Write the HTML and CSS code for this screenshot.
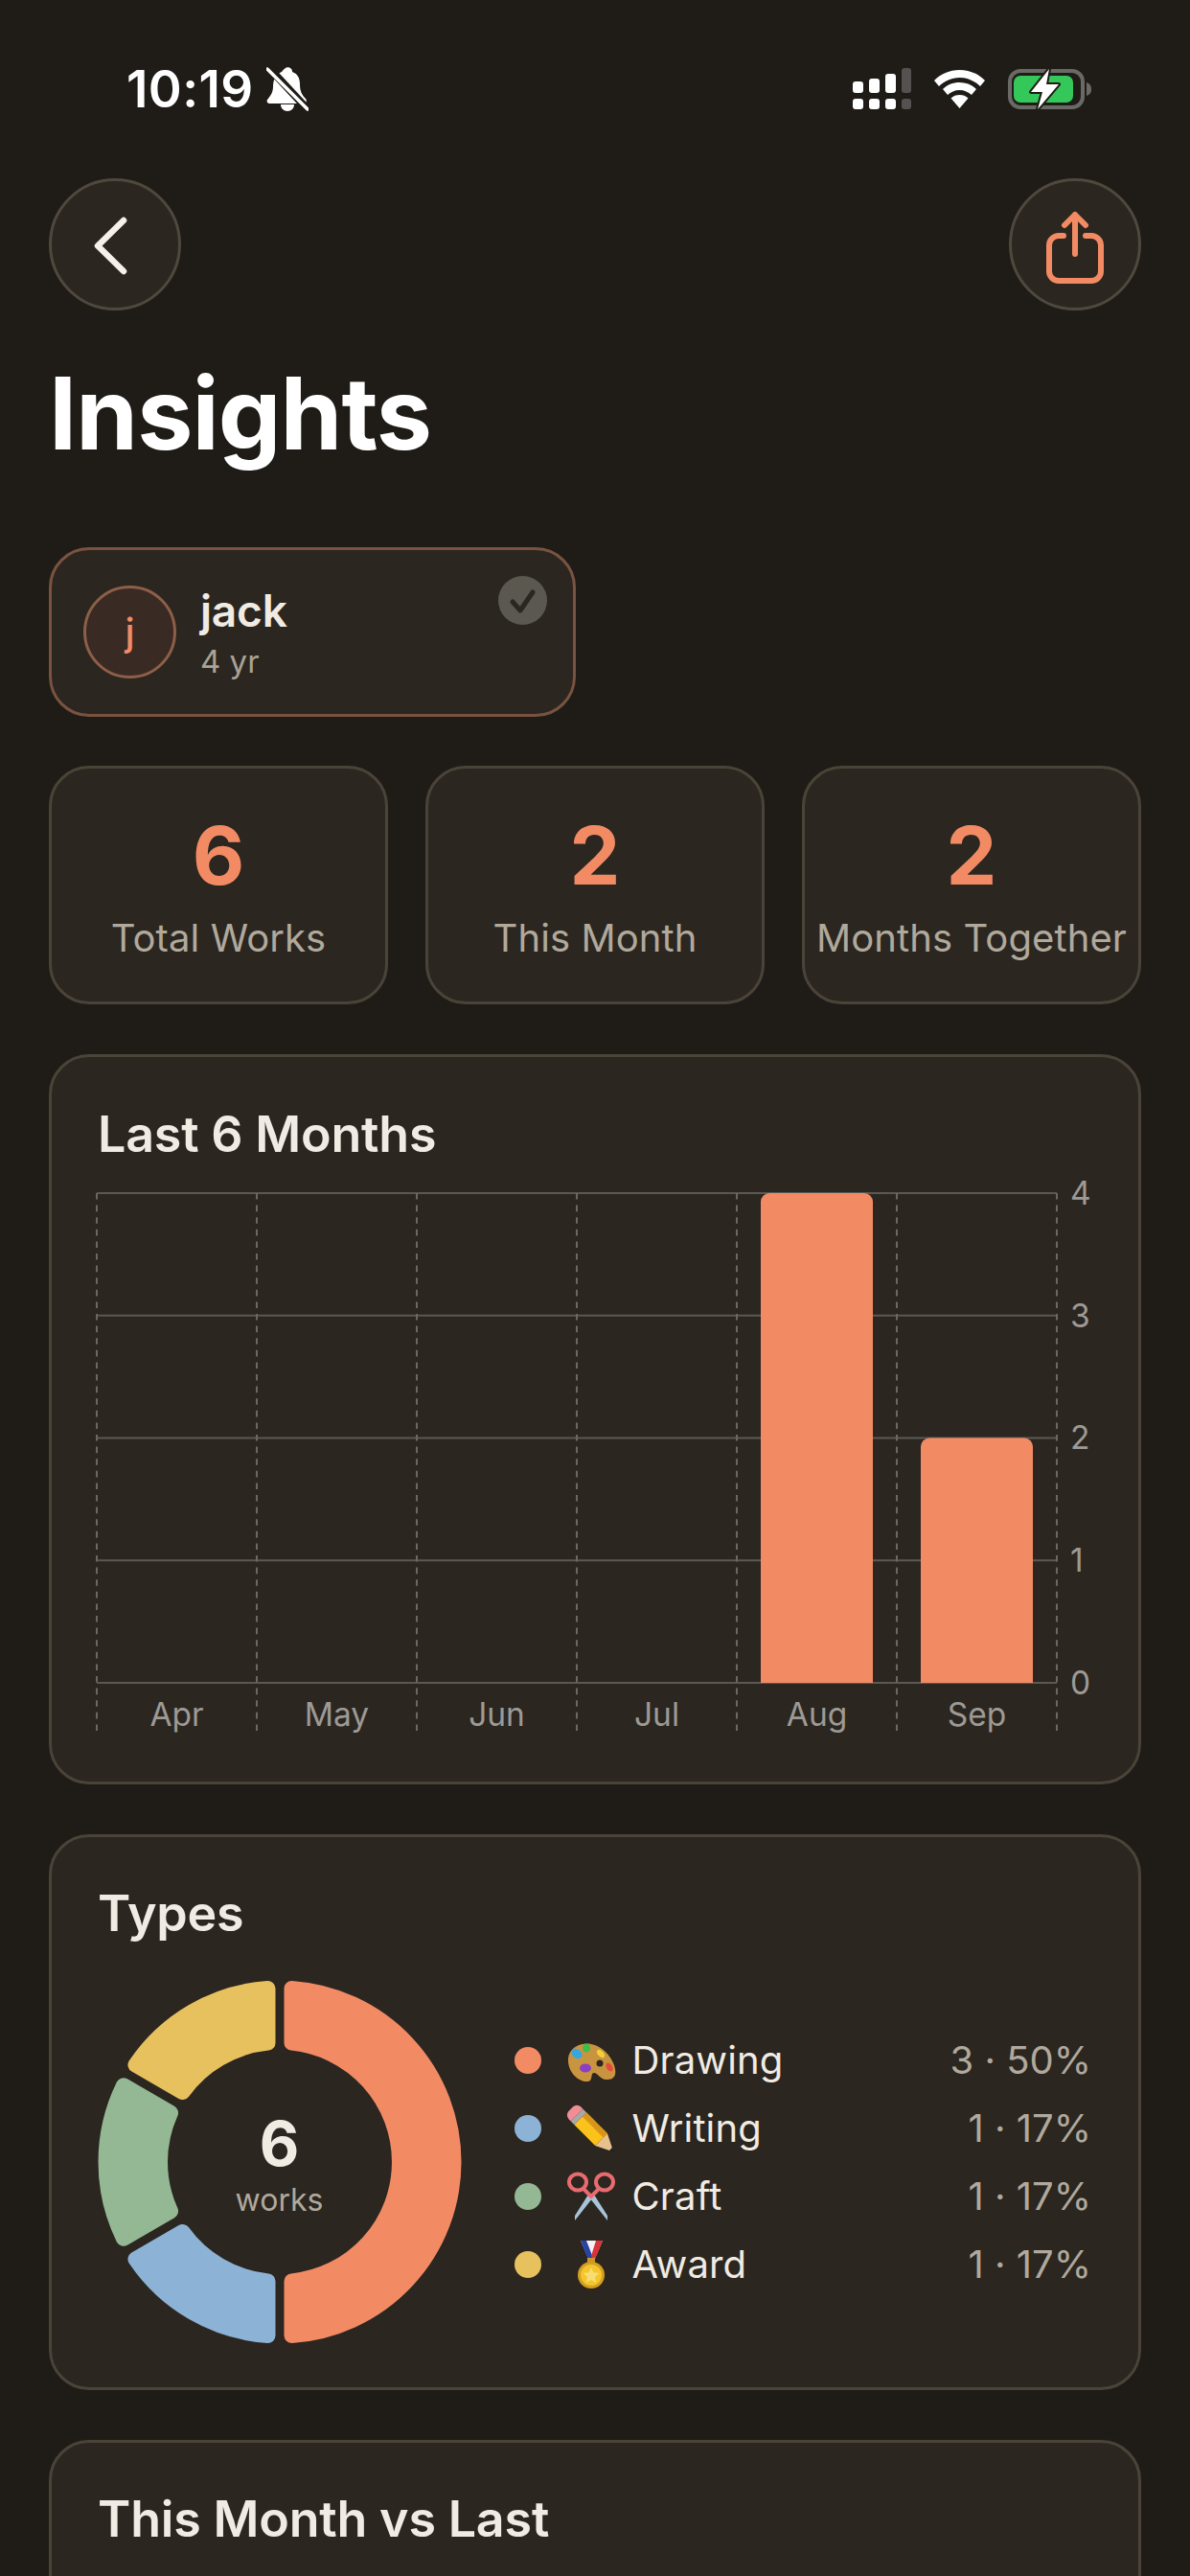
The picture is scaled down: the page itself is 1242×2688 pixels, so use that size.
FILE: index.html
```html
<!DOCTYPE html>
<html lang="en">
<head>
<meta charset="utf-8">
<title>Insights</title>
<link rel="stylesheet" href="styles.css">
</head>
<body>
<div class="screen">
  <header class="status">
    <div class="status-left">
      <span class="time">10:19</span>
      <svg class="bell" viewBox="0 0 44 46" width="44" height="46">
        <path class="white" d="M20 1c1-1 5-1 6 1 1 1 1 2 1 3 6 2 8 7 8 13 0 7 2 11 6 15 2 3 0 5-3 5H4c-3 0-4-2-3-4 4-5 6-8 6-14 0-7 3-13 9-15 1-1 2-3 4-4z"/>
        <path class="white" d="M15 39h14c0 4-3 7-7 7s-7-3-7-7z"/>
        <path class="bell-cut" d="M3 1l39 42"/>
        <path class="bell-line" d="M1 2l42 42"/>
      </svg>
    </div>
    <div class="status-right">
      <svg class="signal" viewBox="0 0 61 44" width="61" height="44">
        <rect class="white" x="0" y="14" width="11" height="12" rx="3"/>
        <rect class="white" x="17" y="11" width="11" height="15" rx="3"/>
        <rect class="white" x="34" y="6" width="11" height="20" rx="3"/>
        <rect class="dim" x="51" y="0" width="10" height="26" rx="3"/>
        <rect class="white" x="0" y="32" width="11" height="11" rx="3"/>
        <rect class="white" x="17" y="32" width="11" height="11" rx="3"/>
        <rect class="white" x="34" y="32" width="11" height="11" rx="3"/>
        <rect class="dim" x="51" y="32" width="10" height="11" rx="3"/>
      </svg>
      <svg class="wifi" viewBox="0 0 53 40" width="53" height="40">
        <path class="white" d="M26.5 0C16 0 7 4 0 11l5 6c6-5.500 13-9 21.500-9S42 11.500 48 17l5-6C46 4 37 0 26.500 0z"/>
        <path class="white" d="M26.500 13c-7 0-13 2.500-17.500 7l5 6c3.500-3 7.500-5 12.500-5s9 2 12.500 5l5-6c-4.500-4.500-10.500-7-17.500-7z"/>
        <path class="white" d="M26.500 26c-3.500 0-6.500 1-9 3.500l9 10.500 9-10.500c-2.500-2.500-5.500-3.500-9-3.500z"/>
      </svg>
      <svg class="battery" viewBox="0 0 87 44" width="87" height="44">
        <rect class="batt-shell" x="2" y="3" width="76" height="38" rx="11"/>
        <path class="batt-nub" d="M82 15c3 1 5 3 5 7s-2 6-5 7z"/>
        <rect class="batt-fill" x="6" y="8" width="62" height="28" rx="7"/>
        <path class="batt-bolt" d="M43 1L24 25h12l-5 18 22-26H40z"/>
      </svg>
    </div>
  </header>

  <main class="content">
    <nav class="nav">
      <button class="round-btn" aria-label="Back">
        <svg viewBox="0 0 132 132" width="132" height="132"><path class="chevron" d="M75 41L48 67.500 75 94"/></svg>
      </button>
      <button class="round-btn" aria-label="Share">
        <svg viewBox="0 0 132 132" width="132" height="132">
          <path class="share" d="M54 57h-5a10 10 0 0 0-10 10v27a10 10 0 0 0 10 10h34a10 10 0 0 0 10-10V67a10 10 0 0 0-10-10h-6"/>
          <path class="share" d="M66 76V35M55 46l11-11 11 11"/>
        </svg>
      </button>
    </nav>

    <h1 class="page-title">Insights</h1>

    <section class="user-card">
      <div class="avatar">j</div>
      <div class="user-text">
        <div class="user-name">jack</div>
        <div class="user-age">4 yr</div>
      </div>
      <svg class="check" viewBox="0 0 51 51" width="51" height="51">
        <circle class="check-bg" cx="25.500" cy="25.500" r="25.500"/>
        <path class="check-mark" d="M15 27l8 9 13-19"/>
      </svg>
    </section>

    <section class="stats">
      <div class="stat"><div class="stat-num">6</div><div class="stat-label">Total Works</div></div>
      <div class="stat"><div class="stat-num">2</div><div class="stat-label">This Month</div></div>
      <div class="stat"><div class="stat-num">2</div><div class="stat-label">Months Together</div></div>
    </section>

    <section class="card chart-card">
      <h2 class="card-title">Last 6 Months</h2>
      <svg class="chart" viewBox="0 -20 1040 590" width="1040" height="590">
        <g class="grid-h">
          <path d="M1 5H1003"/><path d="M1 132.750H1003"/><path d="M1 260.500H1003"/><path d="M1 388.250H1003"/><path d="M1 516H1003"/>
        </g>
        <g class="grid-v">
          <path d="M1 5V567"/><path d="M168 5V567"/><path d="M335 5V567"/><path d="M502 5V567"/><path d="M669 5V567"/><path d="M836 5V567"/><path d="M1003 5V567"/>
        </g>
        <path class="bar" d="M694 516V14a9 9 0 0 1 9-9h99a9 9 0 0 1 9 9V516z"/>
        <path class="bar" d="M861 516V269.500a9 9 0 0 1 9-9h99a9 9 0 0 1 9 9V516z"/>
        <g class="axis-y">
          <text x="1017" y="17">4</text><text x="1017" y="145">3</text><text x="1017" y="272">2</text><text x="1017" y="400">1</text><text x="1017" y="528">0</text>
        </g>
        <g class="axis-x">
          <text x="84.500" y="561">Apr</text><text x="251.500" y="561">May</text><text x="418.500" y="561">Jun</text><text x="585.500" y="561">Jul</text><text x="752.500" y="561">Aug</text><text x="919.500" y="561">Sep</text>
        </g>
      </svg>
    </section>

    <section class="card types-card">
      <h2 class="card-title">Types</h2>
      <div class="types-body">
        <div class="donut-wrap">
          <svg class="donut" viewBox="-190 -190 380 380" width="380" height="380">
            <path class="seg seg-orange" d="M12.500 -181.070A181.500 181.500 0 0 1 12.500 181.070L12.500 124.370A125 125 0 0 0 12.500 -124.370Z"/>
            <path class="seg seg-blue" d="M-12.500 181.070A181.500 181.500 0 0 1 -150.560 101.360L-101.460 73.010A125 125 0 0 0 -12.500 124.370Z"/>
            <path class="seg seg-green" d="M-163.060 79.710A181.500 181.500 0 0 1 -163.060 -79.710L-113.960 -51.360A125 125 0 0 0 -113.960 51.360Z"/>
            <path class="seg seg-yellow" d="M-150.560 -101.360A181.500 181.500 0 0 1 -12.500 -181.070L-12.500 -124.370A125 125 0 0 0 -101.460 -73.010Z"/>
          </svg>
          <div class="donut-center">
            <div class="donut-num">6</div>
            <div class="donut-label">works</div>
          </div>
        </div>
        <ul class="legend">
          <li class="legend-row">
            <span class="dot dot-orange"></span>
            <svg class="emoji" viewBox="0 0 52 52" width="52" height="52">
              <path class="pal-body" d="M2 24C3 13 15 7 26 9c11 2 20 11 24 22 3 9 1 15-7 15-7 1-10-7-14-7-4 0-1 8-6 9C12 49 1 37 2 24z"/>
              <ellipse class="pal-blue" cx="11" cy="19" rx="4.500" ry="6" transform="rotate(-50 11 19)"/>
              <ellipse class="pal-green" cx="21" cy="13" rx="4" ry="4.500"/>
              <ellipse class="pal-yellow" cx="36" cy="19" rx="3" ry="5" transform="rotate(-45 36 19)"/>
              <ellipse class="pal-purple" cx="20" cy="34" rx="6" ry="4.500"/>
              <ellipse class="pal-red" cx="45" cy="33" rx="3" ry="5" transform="rotate(-30 45 33)"/>
              <circle class="pal-hole" cx="35" cy="29" r="3.500"/>
            </svg>
            <span class="legend-name">Drawing</span>
            <span class="legend-val">3 · 50%</span>
          </li>
          <li class="legend-row">
            <span class="dot dot-blue"></span>
            <svg class="emoji" viewBox="0 0 52 52" width="52" height="52">
              <g transform="translate(50 51) rotate(-45)">
                <path class="pen-tip" d="M-2 -5L0 0L2 -5z"/>
                <path class="pen-wood" d="M-9 -19L-2 -5H2L9 -19z"/>
                <rect class="pen-body" x="-9" y="-50" width="18" height="31"/>
                <rect class="pen-shade" x="3" y="-50" width="6" height="31"/>
                <rect class="pen-ferrule" x="-9" y="-55" width="18" height="5"/>
                <path class="pen-eraser" d="M-9 -55V-58a6 6 0 0 1 6-6H3a6 6 0 0 1 6 6V-55z"/>
              </g>
            </svg>
            <span class="legend-name">Writing</span>
            <span class="legend-val">1 · 17%</span>
          </li>
          <li class="legend-row">
            <span class="dot dot-green"></span>
            <svg class="emoji" viewBox="0 0 52 52" width="52" height="52">
              <path class="blade-a" d="M24 27L29 24 43 46 43 51z"/>
              <path class="blade-b" d="M28 27L23 24 9 46 9 51z"/>
              <path class="handle" d="M18 18L27 27M34 18L25 27"/>
              <ellipse class="handle" cx="12" cy="11" rx="9" ry="8.500"/>
              <ellipse class="handle" cx="40" cy="11" rx="9" ry="8.500"/>
            </svg>
            <span class="legend-name">Craft</span>
            <span class="legend-val">1 · 17%</span>
          </li>
          <li class="legend-row">
            <span class="dot dot-yellow"></span>
            <svg class="emoji" viewBox="0 0 52 52" width="52" height="52">
              <path class="rib-white" d="M15 1H38L29 22H24z"/>
              <path class="rib-blue" d="M15 1H21L28 19 24 23z"/>
              <path class="rib-red" d="M31 1H38L29 23 26 17z"/>
              <rect class="med-ring" x="22" y="19" width="8" height="6"/>
              <circle class="med-edge" cx="26" cy="37" r="14"/>
              <circle class="med-face" cx="26" cy="37" r="11"/>
              <path class="med-star" d="M26 29l2.500 5.300 5.800.700-4.300 4 1.100 5.700-5.100-2.800-5.100 2.800 1.100-5.700-4.300-4 5.800-.7z"/>
            </svg>
            <span class="legend-name">Award</span>
            <span class="legend-val">1 · 17%</span>
          </li>
        </ul>
      </div>
    </section>

    <section class="card clipped-card">
      <h2 class="card-title">This Month vs Last</h2>
    </section>
  </main>
</div>
</body>
</html>
```
FILE: styles.css
```css
* { box-sizing: border-box; }
html, body { margin: 0; padding: 0; background: #1f1c17; }
body { font-family: Inter, "Liberation Sans", sans-serif; color: #f0ebe3; }
.screen { width: 1242px; height: 2688px; overflow: hidden; background: #1f1c17; }

/* status bar */
.status { display: flex; justify-content: space-between; align-items: center; height: 186px; padding: 70px 103px 70px 132px; }
.status-left { display: flex; align-items: center; gap: 13px; }
.status-right { display: flex; align-items: center; gap: 24px; }
.time { font-size: 53px; font-weight: 600; line-height: 46px; color: #fff; letter-spacing: .4px; }
.white { fill: #fff; }
.dim { fill: #545250; }
.bell-cut { stroke: #1f1c17; stroke-width: 8; fill: none; }
.bell-line { stroke: #fff; stroke-width: 3.500; stroke-linecap: round; fill: none; }
.batt-shell { fill: none; stroke: #6a6966; stroke-width: 4; }
.batt-nub { fill: #6a6966; }
.batt-fill { fill: #34c759; }
.batt-bolt { fill: #fff; stroke: #1f1c17; stroke-width: 4; stroke-linejoin: round; paint-order: stroke; }

/* page */
.content { padding: 0 51px; display: flex; flex-direction: column; gap: 51px; }
.nav { display: flex; justify-content: space-between; }
.round-btn { width: 138px; height: 138px; padding: 0; border-radius: 50%; border: 3px solid #4f483d; background: #2b2620; display: block; }
.round-btn svg { display: block; }
.chevron { fill: none; stroke: #f5f0e8; stroke-width: 6.500; stroke-linecap: round; stroke-linejoin: round; }
.share { fill: none; stroke: #f28b64; stroke-width: 6; stroke-linecap: round; stroke-linejoin: round; }
.page-title { margin: -6px 0 27px; font-size: 104px; line-height: 124px; font-weight: 700; color: #fff; letter-spacing: -.9px; }

/* user */
.user-card { position: relative; width: 550px; height: 177px; display: flex; align-items: center; gap: 25px; padding-left: 33px; background: #2b2620; border: 3px solid #7a5340; border-radius: 42px; }
.avatar { width: 97px; height: 97px; border-radius: 50%; border: 3px solid #8d5f48; background: #3a2a24; color: #f28b64; font-size: 40px; font-weight: 500; display: flex; align-items: center; justify-content: center; }
.user-name { font-size: 46px; line-height: 56px; font-weight: 600; color: #f0ebe3; letter-spacing: -.2px; }
.user-age { margin-top: 5px; font-size: 33px; line-height: 40px; color: #a9a296; }
.check { position: absolute; top: 27px; right: 27px; }
.check-bg { fill: #5b5850; }
.check-mark { fill: none; stroke: #2b2620; stroke-width: 5; stroke-linecap: round; stroke-linejoin: round; }

/* stats */
.stats { display: grid; grid-template-columns: repeat(3, 1fr); gap: 39px; margin-bottom: 1px; }
.stat { height: 249px; padding-top: 46px; background: #2b2620; border: 3px solid #4a4338; border-radius: 42px; text-align: center; }
.stat-num { font-size: 84px; line-height: 90px; font-weight: 700; color: #f28b64; }
.stat-label { margin-top: 17px; font-size: 40px; line-height: 48px; color: #b0a99c; white-space: nowrap; letter-spacing: .1px; }

/* cards */
.card { padding: 50px 49px 49px 48px; background: #2b2620; border: 3px solid #4a4338; border-radius: 42px; }
.card-title { margin: 0; font-size: 52px; line-height: 62px; font-weight: 600; color: #f0ebe3; letter-spacing: -.2px; }
.chart-card { margin-bottom: 1px; }
.chart-card .card-title { margin-bottom: 5px; }
.chart { display: block; margin-left: -2px; }
.grid-h path { stroke: #5c5954; stroke-width: 2; fill: none; }
.grid-v path { stroke: #6b6864; stroke-width: 2; stroke-dasharray: 6.600 6; fill: none; }
.bar { fill: #f28b64; }
.axis-y text, .axis-x text { font-family: Inter, "Liberation Sans", sans-serif; font-size: 33.500px; fill: #9d9a95; }
.axis-x text { text-anchor: middle; }

/* types */
.types-card { padding-top: 49px; height: 580px; margin-bottom: 1px; }
.types-card .card-title { margin-bottom: 38px; }
.types-body { display: flex; align-items: center; }
.donut-wrap { position: relative; width: 380px; height: 380px; margin-left: -.5px; flex: none; }
.donut { display: block; }
.seg { stroke-width: 16; stroke-linejoin: round; }
.seg-orange { fill: #f28b64; stroke: #f28b64; }
.seg-blue { fill: #8cb3d6; stroke: #8cb3d6; }
.seg-green { fill: #94b893; stroke: #94b893; }
.seg-yellow { fill: #e8c15f; stroke: #e8c15f; }
.donut-center { position: absolute; inset: 0; padding-top: 5px; display: flex; flex-direction: column; align-items: center; justify-content: center; }
.donut-num { font-size: 64px; line-height: 72px; font-weight: 700; color: #f0ebe3; }
.donut-label { font-size: 32px; line-height: 40px; color: #b0a99c; margin-top: 3px; }

.legend { flex: 1; margin: 0 0 0 55px; padding: 0; list-style: none; display: flex; flex-direction: column; }
.legend-row { display: flex; align-items: center; height: 71px; }
.dot { width: 28px; height: 28px; border-radius: 50%; flex: none; }
.dot-orange { background: #f28b64; }
.dot-blue { background: #8cb3d6; }
.dot-green { background: #94b893; }
.dot-yellow { background: #e8c15f; }
.emoji { flex: none; margin: 0 17px 0 26px; }
.legend-name { flex: 1; font-size: 40px; color: #f0ebe3; letter-spacing: .15px; }
.legend-val { font-size: 40px; color: #b0a99c; }

.pal-body { fill: #c9943f; }
.pal-blue { fill: #35a7e0; }
.pal-green { fill: #3ebf4a; }
.pal-yellow { fill: #f2d03a; }
.pal-purple { fill: #8a3fc4; }
.pal-red { fill: #e8493f; }
.pal-hole { fill: #2b2620; }
.pen-tip { fill: #222; }
.pen-wood { fill: #e8c08e; }
.pen-body { fill: #fbc21c; }
.pen-shade { fill: #d8951a; }
.pen-ferrule { fill: #a9a9a9; }
.pen-eraser { fill: #ef8f95; }
.blade-a, .blade-b { fill: #a9c4d8; }
.handle { fill: none; stroke: #e86b70; stroke-width: 4; }
.rib-white { fill: #f2f2f2; }
.rib-blue { fill: #2743a8; }
.rib-red { fill: #d8333a; }
.med-ring { fill: #c8962a; }
.med-edge { fill: #d39f20; }
.med-face { fill: #f4c62e; }
.med-star { fill: #f8dd74; }

.clipped-card { min-height: 400px; padding-top: 49px; }
```
